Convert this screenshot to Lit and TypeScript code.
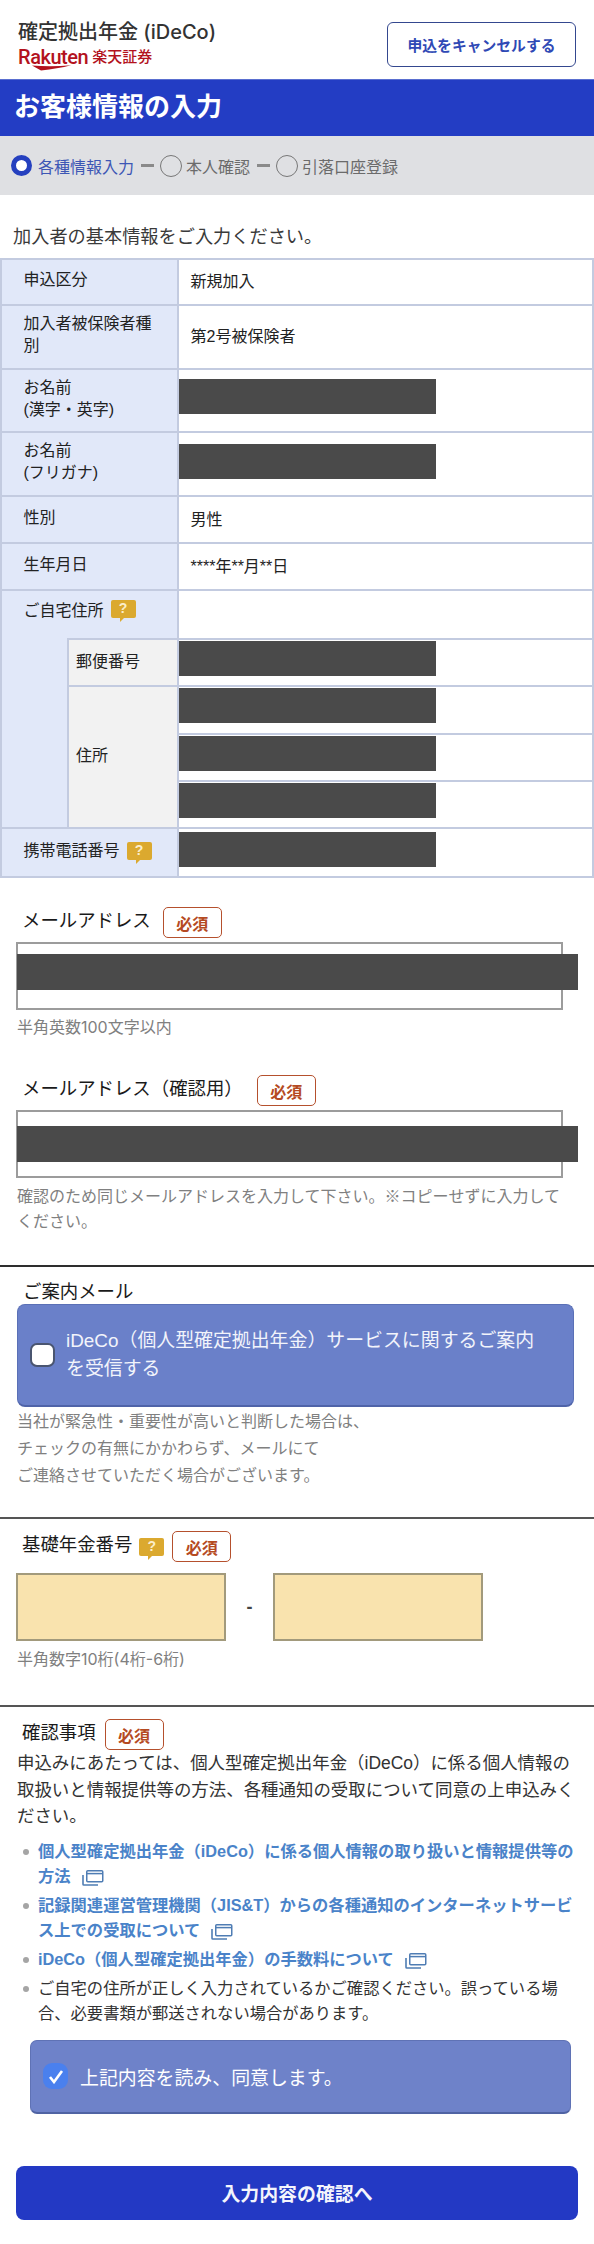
import { LitElement, html, css, nothing } from "lit";
import { customElement } from "lit/decorators.js";

const help = html`<span class="help">?</span>`;
const req = html`<span class="badge">必須</span>`;
const ext = html`<svg class="ext" width="22" height="17" viewBox="0 0 22 17" fill="none" stroke="#4f7db4">
  <rect x="4.75" y="1.75" width="16" height="11" rx="1" stroke-width="1.5"/>
  <path d="M4.75 4.6h16" stroke-width="1.5"/>
  <path d="M1 6v9.2a.8.8 0 0 0 .8.8H16" stroke-width="1.6"/>
</svg>`;

type Row = { label?: unknown; value?: string; mask?: number; sub?: boolean; top?: number };

@customElement("app-root")
export class AppRoot extends LitElement {
  static styles = css`
    :host {
      display: block;
      width: 594px;
      background: #fff;
      color: #222;
      font-family: "Liberation Sans", "Noto Sans CJK JP", sans-serif;
    }
    * { box-sizing: border-box; }
    .head { height: 79px; display: flex; justify-content: space-between; padding: 22px 18px 0 18px; }
    .brand { display: flex; flex-direction: column; margin-top: -2px; }
    .brand-title { font-family: Inter, "Noto Sans CJK JP", sans-serif; font-size: 20px; font-weight: 500; line-height: 24px; color: #333; white-space: nowrap; }
    .logo { position: relative; display: flex; align-items: center; gap: 4px; height: 20px; margin-top: 3px; color: #b3121d; white-space: nowrap; }
    .logo-r { font-family: Roboto, sans-serif; font-weight: 500; font-size: 20px; letter-spacing: -0.45px; line-height: 20px; }
    .logo-j { font-size: 15px; font-weight: 500; line-height: 20px; }
    .swoosh { position: absolute; left: 14px; top: 18px; }
    .cancel { width: 189px; height: 45px; border: 1.5px solid #34488f; border-radius: 6px; display: flex; align-items: center; justify-content: center; font-size: 14.8px; font-weight: 700; color: #2f49b5; white-space: nowrap; }
    .bar { height: 57px; background: #233dc4; color: #fff; font-size: 26px; font-weight: 700; line-height: 57px; padding-left: 14px; box-shadow: inset 0 1px 0 #5a6fd0; }
    .steps { height: 59px; background: #dfe0e3; display: flex; align-items: center; padding-left: 11px; font-size: 16px; color: #6b6b6b; white-space: nowrap; }
    .radio { width: 22px; height: 22px; border-radius: 50%; border: 1.3px solid #777; flex: none; margin-right: 4.5px; }
    .radio.on { width: 21px; height: 21px; border: 5.5px solid #2540bf; background: #fff; margin-right: 6px; }
    .step-on { color: #3d57b5; }
    .dash { width: 13px; height: 2.5px; background: #8a8a8a; margin: 0 5.5px 0 7px; flex: none; }
    .intro { font-size: 18.2px; line-height: 26px; padding: 29px 0 0 13px; height: 63px; color: #3a3a3a; white-space: nowrap; }
    .table { display: grid; grid-template-columns: 65px 112px 1fr; grid-template-rows: 46px 64px 63px 64px 47px 47px 49px 47px 47.5px 47px 47.5px 49px; border-top: 2px solid #c3cbe0; border-left: 2px solid #c3cbe0; height: 620px; }
    .cell { border-bottom: 2px solid #c3cbe0; border-right: 2px solid #c3cbe0; font-size: 16px; line-height: 22px; min-width: 0; }
    .lab { grid-column: 1 / 3; background: #e1e8f9; display: flex; align-items: center; padding: 0 20px 4px 21.5px; }
    .lab.top { align-items: flex-start; padding-top: 9px; border-bottom: none; }
    .spacer { grid-column: 1; grid-row: 8 / 12; background: #e1e8f9; border-right: none; }
    .sub { grid-column: 2; background: #f2f2f2; display: flex; align-items: center; padding: 0 0 2px 7px; border-left: 2px solid #c3cbe0; }
    .sub.first { border-top: 2px solid #c3cbe0; margin-top: -2px; }
    .val { grid-column: 3; display: flex; align-items: center; padding-left: 11.5px; }
    .val.m { display: block; padding: 0; }
    .mask { background: #4a4a4a; }
    .cellmask { width: 257px; height: 35px; }
    .help { position: relative; display: inline-block; width: 25px; height: 18px; border-radius: 2px; background: #dba92f; color: #fbeecb; font-size: 14px; font-weight: 700; line-height: 16px; text-align: center; margin-left: 7px; flex: none; }
    .help::after { content: ""; position: absolute; left: 9px; top: 17px; border-style: solid; border-width: 5px 5px 0 0; border-color: #dba92f transparent transparent transparent; }
    .f-row { display: flex; align-items: center; height: 31px; padding-left: 22px; }
    .f-lab { font-size: 18.4px; line-height: 25px; color: #1a1a1a; margin-top: -4px; white-space: nowrap; }
    .badge { display: inline-flex; align-items: center; justify-content: center; width: 59px; height: 31px; border: 1.5px solid #b5502d; border-radius: 5px; color: #b54a22; font-size: 16px; font-weight: 700; background: #fff; flex: none; }
    .input { position: relative; width: 547px; height: 68px; margin: 4px 0 0 16px; border: 2px solid #9c9c9c; background: #fff; }
    .inmask { position: absolute; left: -1px; width: 561px; height: 36px; }
    .hint { font-family: Inter, "Noto Sans CJK JP", sans-serif; color: #808080; font-size: 16px; line-height: 25px; margin: 5px 0 0 17px; width: 547px; }
    .cjk { font-family: "Noto Sans CJK JP", sans-serif; }
    .rule { height: 2px; }
    .rule.a { background: #2e2e2e; }
    .rule.b { background: #555; }
    .card { display: flex; align-items: center; margin: 0 0 0 17px; width: 557px; height: 103px; background: #6a80c9; border: 1px solid #5a70b6; border-bottom: 2px solid #4f63a8; border-radius: 8px; padding-left: 12px; color: #f2f4fb; font-size: 18.9px; line-height: 28px; }
    .box { width: 25px; height: 24px; background: #fff; border: 2px solid #4a5570; border-radius: 7px; margin-right: 11px; flex: none; }
    .hint2 { color: #808080; font-size: 16px; line-height: 27px; margin: 1px 0 0 17px; white-space: nowrap; }
    .pension { display: flex; align-items: center; margin: 11px 0 0 16px; }
    .pin { width: 210px; height: 68px; background: #f9e3ae; border: 2px solid #a29a7c; }
    .sep { width: 47px; text-align: center; font-size: 18px; font-weight: 700; color: #444; }
    .para { font-size: 17.45px; line-height: 26.5px; margin: 0 16px 0 17px; color: #333; }
    ul { list-style: none; margin: 9px 0 0; padding: 0 16px 0 38px; display: flex; flex-direction: column; gap: 4px; }
    li { position: relative; font-size: 16.3px; line-height: 25px; color: #333; padding-right: 20px; }
    li::before { content: ""; position: absolute; left: -15.5px; top: 10px; width: 6px; height: 6px; border-radius: 50%; background: #a5a5a5; }
    li.link { color: #4a83c9; font-weight: 700; padding-right: 0; }
    .ext { vertical-align: -4px; margin-left: 11px; }
    .agree { display: flex; align-items: center; width: 541px; height: 74px; margin: 14px 0 0 30px; background: #6e82c9; border: 1px solid #5f72b5; border-bottom: 2px solid #4f63a3; border-radius: 7px; padding-left: 12px; color: #fff; font-size: 18.9px; }
    .tick { width: 25px; height: 26px; border-radius: 9px; background: #4a80ee; display: flex; align-items: center; justify-content: center; margin-right: 12px; flex: none; }
    .submit { display: flex; align-items: center; justify-content: center; width: 562px; height: 54px; margin: 52px 0 24px 16px; background: #2339c4; border-radius: 8px; color: #f4f5fc; font-size: 18.9px; font-weight: 700; }
  `;

  private rows: Row[] = [
    { label: "申込区分", value: "新規加入" },
    { label: html`加入者被保険者種<br />別`, value: "第2号被保険者" },
    { label: html`お名前<br />(漢字・英字)`, mask: 9 },
    { label: html`お名前<br />(フリガナ)`, mask: 11 },
    { label: "性別", value: "男性" },
    { label: "生年月日", value: "****年**月**日" },
    { label: html`ご自宅住所${help}`, top: 1 },
    { label: "郵便番号", sub: true, mask: 1 },
    { label: "住所", sub: true, mask: 1 },
    { mask: 1.5 },
    { mask: 1.5 },
    { label: html`携帯電話番号${help}`, mask: 3 },
  ];

  private cellFor(r: Row, i: number) {
    const rowStyle = `grid-row:${i + 1}`;
    const val =
      r.mask !== undefined
        ? html`<div class="cell val m" style=${rowStyle}><div class="mask cellmask" style="margin-top:${r.mask}px"></div></div>`
        : html`<div class="cell val" style=${rowStyle}>${r.value ?? nothing}</div>`;
    let lab: unknown = nothing;
    if (r.sub) {
      const span = r.label === "住所" ? `grid-row:${i + 1} / span 3` : rowStyle;
      lab = html`<div class="cell sub ${r.label === "住所" ? "" : "first"}" style=${span}>${r.label}</div>`;
    } else if (r.label) {
      lab = html`<div class="cell lab ${r.top ? "top" : ""}" style=${rowStyle}>${r.label}</div>`;
    }
    return html`${lab}${val}`;
  }

  render() {
    return html`
      <div class="head">
        <div class="brand">
          <div class="brand-title">確定拠出年金 (iDeCo)</div>
          <div class="logo">
            <span class="logo-r">Rakuten</span><span class="logo-j">楽天証券</span>
            <svg class="swoosh" width="40" height="6" viewBox="0 0 40 6"><path d="M0 .5C12 1.6 26 1.6 39 .2 30 2.6 20 4 9 5.6 6 4 3 2 0 .5Z" fill="#b3121d"/></svg>
          </div>
        </div>
        <div class="cancel">申込をキャンセルする</div>
      </div>
      <div class="bar">お客様情報の入力</div>
      <div class="steps">
        <span class="radio on"></span><span class="step-on">各種情報入力</span><span class="dash"></span>
        <span class="radio"></span><span>本人確認</span><span class="dash"></span>
        <span class="radio"></span><span>引落口座登録</span>
      </div>
      <div class="intro">加入者の基本情報をご入力ください。</div>
      <div class="table">
        ${this.rows.map((r, i) => this.cellFor(r, i))}
        <div class="cell spacer"></div>
      </div>

      <div class="f-row" style="margin-top:29px"><span class="f-lab">メールアドレス</span><span style="width:12px"></span>${req}</div>
      <div class="input"><div class="mask inmask" style="top:10px"></div></div>
      <div class="hint">半角英数100文字以内</div>

      <div class="f-row" style="margin-top:35px"><span class="f-lab">メールアドレス（確認用）</span><span style="width:14px"></span>${req}</div>
      <div class="input"><div class="mask inmask" style="top:14px"></div></div>
      <div class="hint cjk">確認のため同じメールアドレスを入力して下さい。※コピーせずに入力してください。</div>

      <div class="rule a" style="margin-top:32px"></div>
      <div class="f-lab" style="margin:12px 0 0 23px;height:25px">ご案内メール</div>
      <div class="card">
        <span class="box"></span>
        <span>iDeCo（個人型確定拠出年金）サービスに関するご案内<br />を受信する</span>
      </div>
      <div class="hint2">当社が緊急性・重要性が高いと判断した場合は、<br />チェックの有無にかかわらず、メールにて<br />ご連絡させていただく場合がございます。</div>

      <div class="rule b" style="margin-top:28px"></div>
      <div class="f-row" style="margin-top:12px"><span class="f-lab">基礎年金番号</span>${help}<span style="width:8px"></span>${req}</div>
      <div class="pension">
        <div class="pin"></div><div class="sep">-</div><div class="pin"></div>
      </div>
      <div class="hint" style="margin-top:6px">半角数字10桁(4桁-6桁)</div>

      <div class="rule b" style="margin-top:33px"></div>
      <div class="f-row" style="margin-top:12px"><span class="f-lab">確認事項</span><span style="width:9px"></span>${req}</div>
      <div class="para">申込みにあたっては、個人型確定拠出年金（iDeCo）に係る個人情報の取扱いと情報提供等の方法、各種通知の受取について同意の上申込みください。</div>
      <ul>
        <li class="link">個人型確定拠出年金（iDeCo）に係る個人情報の取り扱いと情報提供等の方法${ext}</li>
        <li class="link">記録関連運営管理機関（JIS&amp;T）からの各種通知のインターネットサービス上での受取について${ext}</li>
        <li class="link">iDeCo（個人型確定拠出年金）の手数料について${ext}</li>
        <li>ご自宅の住所が正しく入力されているかご確認ください。誤っている場合、必要書類が郵送されない場合があります。</li>
      </ul>
      <div class="agree">
        <span class="tick"><svg width="16" height="15" viewBox="0 0 16 15" fill="none"><path d="M2 8l4 5 8-11" stroke="#fff" stroke-width="2.6"/></svg></span>
        <span>上記内容を読み、同意します。</span>
      </div>
      <div class="submit">入力内容の確認へ</div>
    `;
  }
}
